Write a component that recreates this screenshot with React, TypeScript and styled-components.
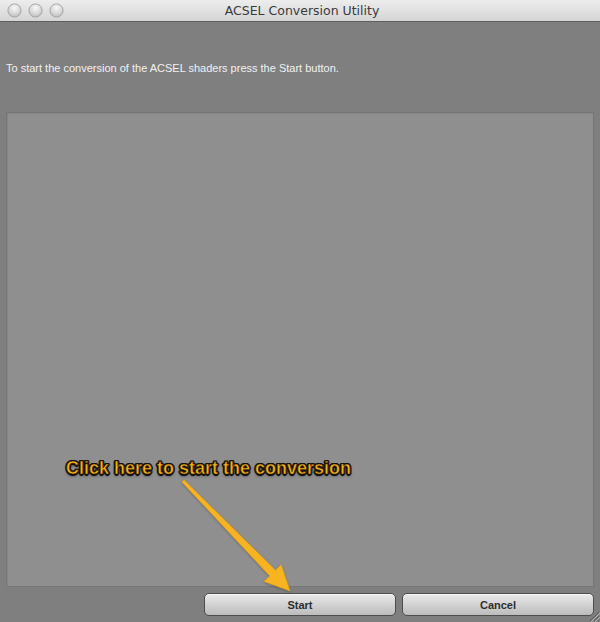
import styled, { createGlobalStyle } from 'styled-components'

const GlobalStyle = createGlobalStyle`
  html, body {
    margin: 0;
    padding: 0;
    background: #7f7f7f;
  }
  body {
    font-family: 'Liberation Sans', Arial, sans-serif;
  }
`

const TrafficLight = () => (
  <Light>
    <svg width="15" height="15" viewBox="0 0 15 15">
      <defs>
        <radialGradient id="lg" cx="50%" cy="30%" r="65%">
          <stop offset="0%" stopColor="#f8f8f8" />
          <stop offset="65%" stopColor="#d8d8d8" />
          <stop offset="100%" stopColor="#c2c2c2" />
        </radialGradient>
      </defs>
      <circle cx="7.5" cy="7.5" r="6.6" fill="url(#lg)" stroke="#a2a2a2" strokeWidth="0.9" />
    </svg>
  </Light>
)

const App = () => (
  <Window>
    <GlobalStyle />
    <TitleBar>
      <Lights>
        <TrafficLight />
        <TrafficLight />
        <TrafficLight />
      </Lights>
      <Title>ACSEL Conversion Utility</Title>
    </TitleBar>
    <Body>
      <Message>To start the conversion of the ACSEL shaders press the Start button.</Message>
      <LogPanel />
      <Footer>
        <Button>Start</Button>
        <Button>Cancel</Button>
      </Footer>
    </Body>
    <Callout>Click here to start the conversion</Callout>
    <Arrow width="140" height="130" viewBox="0 0 140 130">
      <path
        d="M1.9 3 L4.1 1 L95.5 91.3 L101.2 85.7 L110 112 L84 102.5 L89.7 96.9 Z"
        fill="#f7b320"
        stroke="#eaa412"
        strokeWidth="0.6"
        strokeLinejoin="round"
      />
    </Arrow>
    <Grip width="12" height="12" viewBox="0 0 12 12">
      <path d="M11 2 L2 11 M11 6 L6 11 M11 10 L10 11" stroke="#5c5c5c" strokeWidth="1" />
      <path d="M12 3 L3 12 M12 7 L7 12" stroke="#b4b4b4" strokeWidth="1" />
    </Grip>
  </Window>
)

export default App

const Window = styled.div`
  position: relative;
  width: 600px;
  height: 622px;
  background: #7f7f7f;
  display: flex;
  flex-direction: column;
  overflow: hidden;
`

const TitleBar = styled.div`
  position: relative;
  height: 21px;
  flex-shrink: 0;
  background: linear-gradient(#ededed, #d5d5d5);
  border-bottom: 1px solid #5e5e5e;
  display: flex;
  align-items: center;
  justify-content: center;
`

const Lights = styled.div`
  position: absolute;
  left: 7px;
  top: 3px;
  display: flex;
  gap: 6px;
`

const Light = styled.div`
  width: 15px;
  height: 15px;
  display: flex;
`

const Title = styled.div`
  font-family: 'DejaVu Sans', 'Liberation Sans', sans-serif;
  font-size: 12.5px;
  color: #3a3a3a;
  padding-left: 4px;
`

const Body = styled.div`
  flex: 1;
  display: flex;
  flex-direction: column;
  padding: 0 6px;
`

const Message = styled.div`
  margin-top: 40px;
  height: 13px;
  font-size: 11px;
  line-height: 13px;
  color: #f2f2f2;
`

const LogPanel = styled.div`
  margin-top: 37px;
  height: 473px;
  background: #8f8f8f;
  border: 1px solid #767676;
  box-shadow: inset 1px 1px 0 #868686;
`

const Footer = styled.div`
  display: flex;
  justify-content: flex-end;
  gap: 6px;
  padding-top: 6px;
`

const Button = styled.div`
  width: 192px;
  height: 23px;
  box-sizing: border-box;
  border: 1px solid #4d4d4d;
  border-radius: 5px;
  background: linear-gradient(#eaeaea, #d0d0d0 55%, #bcbcbc);
  box-shadow: inset 0 1px 0 #f7f7f7;
  display: flex;
  align-items: center;
  justify-content: center;
  font-size: 11px;
  font-weight: bold;
  color: #2e2e2e;
`

const Callout = styled.div`
  position: absolute;
  left: 66px;
  top: 458px;
  font-family: 'Liberation Sans', Arial, sans-serif;
  font-size: 18px;
  font-weight: bold;
  color: #f8b41e;
  -webkit-text-stroke: 0.6px #3a2400;
  text-shadow:
    -1px -1px 0 #111, 1px -1px 0 #111, -1px 1px 0 #111, 1px 1px 0 #111,
    0 1.5px 0 #111, 1.5px 0 0 #111, -1.5px 0 0 #111, 0 -1.5px 0 #111,
    0 2px 3px rgba(0, 0, 0, 0.6);
`

const Arrow = styled.svg`
  position: absolute;
  left: 180px;
  top: 479px;
  overflow: visible;
  filter: drop-shadow(0 1px 1px rgba(0, 0, 0, 0.25));
`

const Grip = styled.svg`
  position: absolute;
  right: 0;
  bottom: 0;
`
